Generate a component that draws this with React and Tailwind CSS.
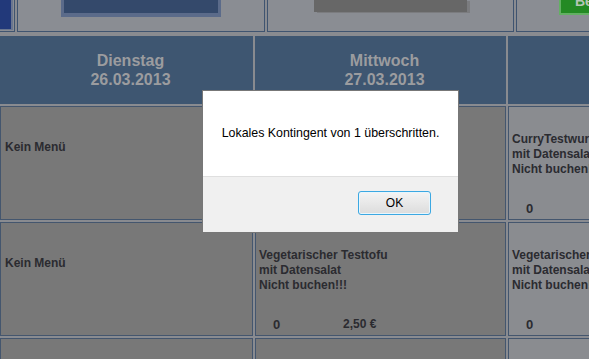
const days = [
  { name: 'Dienstag', date: '26.03.2013' },
  { name: 'Mittwoch', date: '27.03.2013' },
  { name: 'Donnerstag', date: '28.03.2013' },
]

const curry = ['CurryTestwurst', 'mit Datensalat', 'Nicht buchen!!!']
const tofu = ['Vegetarischer Testtofu', 'mit Datensalat', 'Nicht buchen!!!']

// rows of the week table, one entry per day column
const rows = [
  [null, { lines: curry, price: '2,50 €' }, { lines: curry, price: '2,50 €' }],
  [null, { lines: tofu, price: '2,50 €' }, { lines: tofu, price: '2,50 €' }],
  [null, null, null],
]

function MenuCell({ item, light }) {
  const bg = light ? 'bg-[#8a8c90]' : 'bg-[#787878]'
  if (!item) {
    return (
      <div className={`h-[114px] border border-[#44566e] ${bg} pt-[33px] pl-[4px] text-[12px] leading-[15px] font-bold text-[#2b2b30]`}>
        Kein Menü
      </div>
    )
  }
  return (
    <div className={`h-[114px] flex flex-col border border-[#44566e] ${bg} text-[12px] leading-[15px] font-bold text-[#2b2b30] whitespace-nowrap overflow-hidden`}>
      <div className="pt-[25px] pl-[3px]">
        {item.lines.map((l) => (
          <div key={l}>{l}</div>
        ))}
      </div>
      <div className="mt-auto mb-[3px] flex items-center pl-[17px]">
        <span className="w-[70px] text-[13px]">0</span>
        <span className="-mt-[1px]">{item.price}</span>
      </div>
    </div>
  )
}

export default function App() {
  return (
    <div className="relative w-[589px] h-[359px] overflow-hidden bg-[#898b90] font-['Liberation_Sans',Arial,sans-serif]">
      {/* Top toolbar strip */}
      <div className="flex gap-[2px] h-[32px] mb-[4px]">
        <div className="w-[15px] shrink-0 border-r border-b border-[#3f5470] bg-[#8a8d93]">
          <div className="w-[13px] h-[30px] bg-[#22397a] border-r-2 border-b border-[#6a7690]" />
        </div>
        <div className="w-[248px] shrink-0 border-x border-b border-[#3f5470] bg-[#8a8d93] pl-[43px]">
          <div className="w-[160px] h-[17px] bg-[#34496b] border-x-[3px] border-b-[4px] border-[#5b6b8a]" />
        </div>
        <div className="w-[247px] shrink-0 border-x border-b border-[#3f5470] bg-[#8a8d93] pl-[46px]">
          <div className="w-[153px] h-[12px] bg-[#676767] shadow-[3px_1px_0_#7b7c7f]" />
        </div>
        <div className="w-[250px] shrink-0 border-x border-b border-[#3f5470] bg-[#8a8d93] pl-[42px] overflow-hidden">
          <div className="-mt-[12px] w-[120px] h-[27px] bg-[#248a24] border-2 border-[#63b063] pl-[14px] text-[14px] leading-[23px] font-bold text-[#b6c6b6]">
            Bestellen
          </div>
        </div>
      </div>

      {/* Day headers and menu rows */}
      <div className="grid grid-cols-[253px_251px_251px] gap-x-[2px] gap-y-[2px]">
        {days.map((d) => (
          <div key={d.name} className="h-[68px] bg-[#3e5671] flex flex-col items-center justify-center pl-[8px] text-[16px] leading-[19px] font-bold text-[#9b9c9f]">
            <span>{d.name}</span>
            <span>{d.date}</span>
          </div>
        ))}
        {rows.map((row, r) =>
          row.map((item, c) => <MenuCell key={`${r}-${c}`} item={item} light={c === 2} />)
        )}
      </div>

      {/* Alert dialog */}
      <div className="absolute left-[202px] top-[90px] w-[257px] h-[143px] flex flex-col border border-[#777777]">
        <div className="h-[85px] bg-white flex items-center justify-center text-[12.4px] text-black">
          Lokales Kontingent von 1 überschritten.
        </div>
        <div className="flex-1 bg-[#f0f0f0] border-t border-[#dfdfdf] flex justify-end items-start pt-[14px] pr-[27px]">
          <button className="w-[73px] h-[24px] rounded-[3px] border border-[#3ca8e2] bg-gradient-to-b from-[#f4f4f4] to-[#dcdcdc] shadow-[inset_0_0_0_1px_#e8f6fd] text-[12px] text-black leading-none">
            OK
          </button>
        </div>
      </div>
    </div>
  )
}
